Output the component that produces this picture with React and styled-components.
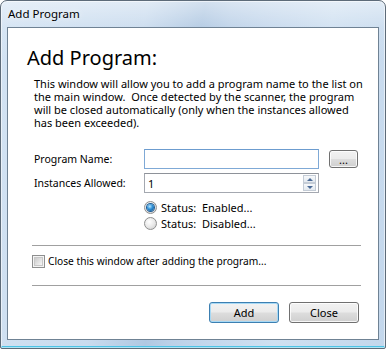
import React from "react";
import styled, { createGlobalStyle } from "styled-components";

const Global = createGlobalStyle`
  html, body { margin: 0; padding: 0; background: #ffffff; }
  body { font-family: "Noto Sans", "Open Sans", sans-serif; color: #000; }
  * { box-sizing: border-box; }
`;

const Window = styled.div`
  width: 386px;
  height: 349px;
  border: 1px solid #5d6b79;
  border-radius: 7px 7px 2px 2px;
  padding: 0 6px 8px 6px;
  display: flex;
  flex-direction: column;
  background:
    linear-gradient(180deg, rgba(255,255,255,0.45) 0px, rgba(255,255,255,0.1) 26px, rgba(255,255,255,0) 60px),
    linear-gradient(100deg, #d3e3f3 0%, #c9dbee 33%, #b0c8e2 46%, #bcd1e8 52%, #c4d7ec 60%, #cfe0f1 75%, #c3d7ec 100%);
  box-shadow: inset 0 0 0 1px rgba(255,255,255,0.55), inset 0 -2px 0 #4cc3e6;
  overflow: hidden;
`;

const TitleBar = styled.div`
  height: 26px;
  display: flex;
  align-items: center;
  padding-left: 1px;
  padding-bottom: 1px;
  font-size: 11.5px;
  color: #000;
  text-shadow: 0 0 6px rgba(255,255,255,0.9);
`;

const Client = styled.div`
  flex: 1;
  background: #ffffff;
  border: 1px solid #6f8294;
  display: flex;
  flex-direction: column;
`;

const Heading = styled.h1`
  margin: 16px 0 0 19px;
  font-size: 20px;
  line-height: 28px;
  font-weight: 400;
  color: #000;
`;

const Intro = styled.div`
  margin: 5px 0 0 26px;
  font-size: 11px;
  color: #000;
  white-space: nowrap;
  display: flex;
  flex-direction: column;
`;

const IntroLine = styled.span`
  display: block;
  height: 13px;
  line-height: 13px;
`;

const Body = styled.div`
  padding: 0 17px 0 24px;
  display: flex;
  flex-direction: column;
`;

const FormGrid = styled.div`
  margin-top: 20px;
  padding-left: 2px;
  display: grid;
  grid-template-columns: 100px 175px 29px;
  column-gap: 10px;
  row-gap: 4px;
  align-items: center;
  font-size: 10.5px;
`;

const Label = styled.label`
  line-height: 20px;
  font-size: 10.5px;
`;

const TextBox = styled.div`
  height: 20px;
  border: 1px solid ${(p) => (p.$focused ? "#7fa9d6" : "#a4a8b0")};
  border-top-color: ${(p) => (p.$focused ? "#6c9ccf" : "#8e9299")};
  background: #fff;
  position: relative;
  display: flex;
  align-items: center;
  padding-left: 3px;
  font-size: 11px;
`;

const Spinner = styled.div`
  position: absolute;
  right: 2px;
  top: 1px;
  width: 13px;
  height: 16px;
  display: flex;
  flex-direction: column;
`;

const SpinButton = styled.div`
  flex: 1;
  border: 1px solid #c4ccd6;
  background: linear-gradient(180deg, #f7f9fb, #e3e9ef);
  display: flex;
  align-items: center;
  justify-content: center;
`;

const Arrow = styled.span`
  width: 0;
  height: 0;
  border-left: 3px solid transparent;
  border-right: 3px solid transparent;
  ${(p) =>
    p.$down
      ? "border-top: 3px solid #4a6a96;"
      : "border-bottom: 3px solid #4a6a96;"}
`;

const Button = styled.button`
  font-family: inherit;
  font-size: 11px;
  color: #000;
  width: ${(p) => p.$w || 70}px;
  height: ${(p) => p.$h || 21}px;
  padding: 0;
  border-radius: 3px;
  border: 1px solid ${(p) => (p.$focused ? "#3c7fb1" : "#707070")};
  background: linear-gradient(180deg, #f2f2f2 0%, #ebebeb 48%, #dddddd 52%, #cfcfcf 100%);
  box-shadow: inset 0 0 0 1px ${(p) => (p.$focused ? "#a7d9f5" : "rgba(255,255,255,0.8)")};
  display: flex;
  align-items: center;
  justify-content: center;
  line-height: 1;
`;

const RadioGroup = styled.div`
  grid-column: 2 / 4;
  margin-top: 2px;
  display: flex;
  flex-direction: column;
`;

const OptionRow = styled.div`
  height: 16px;
  display: flex;
  align-items: center;
  gap: ${(p) => p.$gap || 4}px;
  font-size: ${(p) => p.$size || 11}px;
`;

const RadioDot = styled.span`
  width: 13px;
  height: 13px;
  border-radius: 50%;
  border: 1px solid #8e8f8f;
  background: radial-gradient(circle at 40% 35%, #ffffff 0%, #e9e9e9 50%, #c9c9c9 100%);
  display: flex;
  align-items: center;
  justify-content: center;
  flex: none;
  &::after {
    content: "";
    width: 7px;
    height: 7px;
    border-radius: 50%;
    display: ${(p) => (p.$checked ? "block" : "none")};
    background: radial-gradient(circle at 40% 35%, #b6e6ff 0%, #2e8fd6 45%, #0b4a85 100%);
    box-shadow: 0 0 0 1px #1e5c93;
  }
`;

const CheckBox = styled.span`
  width: 13px;
  height: 13px;
  border: 1px solid #8e8f8f;
  background: #fff;
  box-shadow: inset 0 0 0 1px #f4f4f4, inset 0 0 0 2px #c8c8c8;
  background-image: linear-gradient(135deg, #cbcbcb, #f6f6f6);
  background-size: 7px 7px;
  background-position: 2px 2px;
  background-repeat: no-repeat;
  flex: none;
`;

const Separator = styled.hr`
  margin: ${(p) => p.$top}px 0 0 0;
  border: none;
  height: 1px;
  background: #a0a0a0;
`;

const CheckRow = styled(OptionRow)`
  margin-top: 7px;
`;

const ButtonRow = styled.div`
  margin-top: 16px;
  padding-right: 2px;
  display: flex;
  justify-content: flex-end;
  gap: 10px;
`;

export default function App() {
  return (
    <>
      <Global />
      <Window>
        <TitleBar>Add Program</TitleBar>
        <Client>
          <Heading>Add Program:</Heading>
          <Intro>
            <IntroLine>This window will allow you to add a program name to the list on</IntroLine>
            <IntroLine>the main window.&nbsp; Once detected by the scanner, the program</IntroLine>
            <IntroLine>will be closed automatically (only when the instances allowed</IntroLine>
            <IntroLine>has been exceeded).</IntroLine>
          </Intro>
          <Body>
            <FormGrid>
              <Label>Program Name:</Label>
              <TextBox $focused />
              <Button $w={29} $h={18}>...</Button>
              <Label>Instances Allowed:</Label>
              <TextBox>
                1
                <Spinner>
                  <SpinButton>
                    <Arrow />
                  </SpinButton>
                  <SpinButton>
                    <Arrow $down />
                  </SpinButton>
                </Spinner>
              </TextBox>
              <span />
              <RadioGroup>
                <OptionRow>
                  <RadioDot $checked />
                  <span>Status:&nbsp; Enabled...</span>
                </OptionRow>
                <OptionRow>
                  <RadioDot />
                  <span>Status:&nbsp; Disabled...</span>
                </OptionRow>
              </RadioGroup>
            </FormGrid>
            <Separator $top={14} />
            <CheckRow $gap={3} $size={10.2}>
              <CheckBox />
              <span>Close this window after adding the program...</span>
            </CheckRow>
            <Separator $top={16} />
            <ButtonRow>
              <Button $focused>Add</Button>
              <Button>Close</Button>
            </ButtonRow>
          </Body>
        </Client>
      </Window>
    </>
  );
}
